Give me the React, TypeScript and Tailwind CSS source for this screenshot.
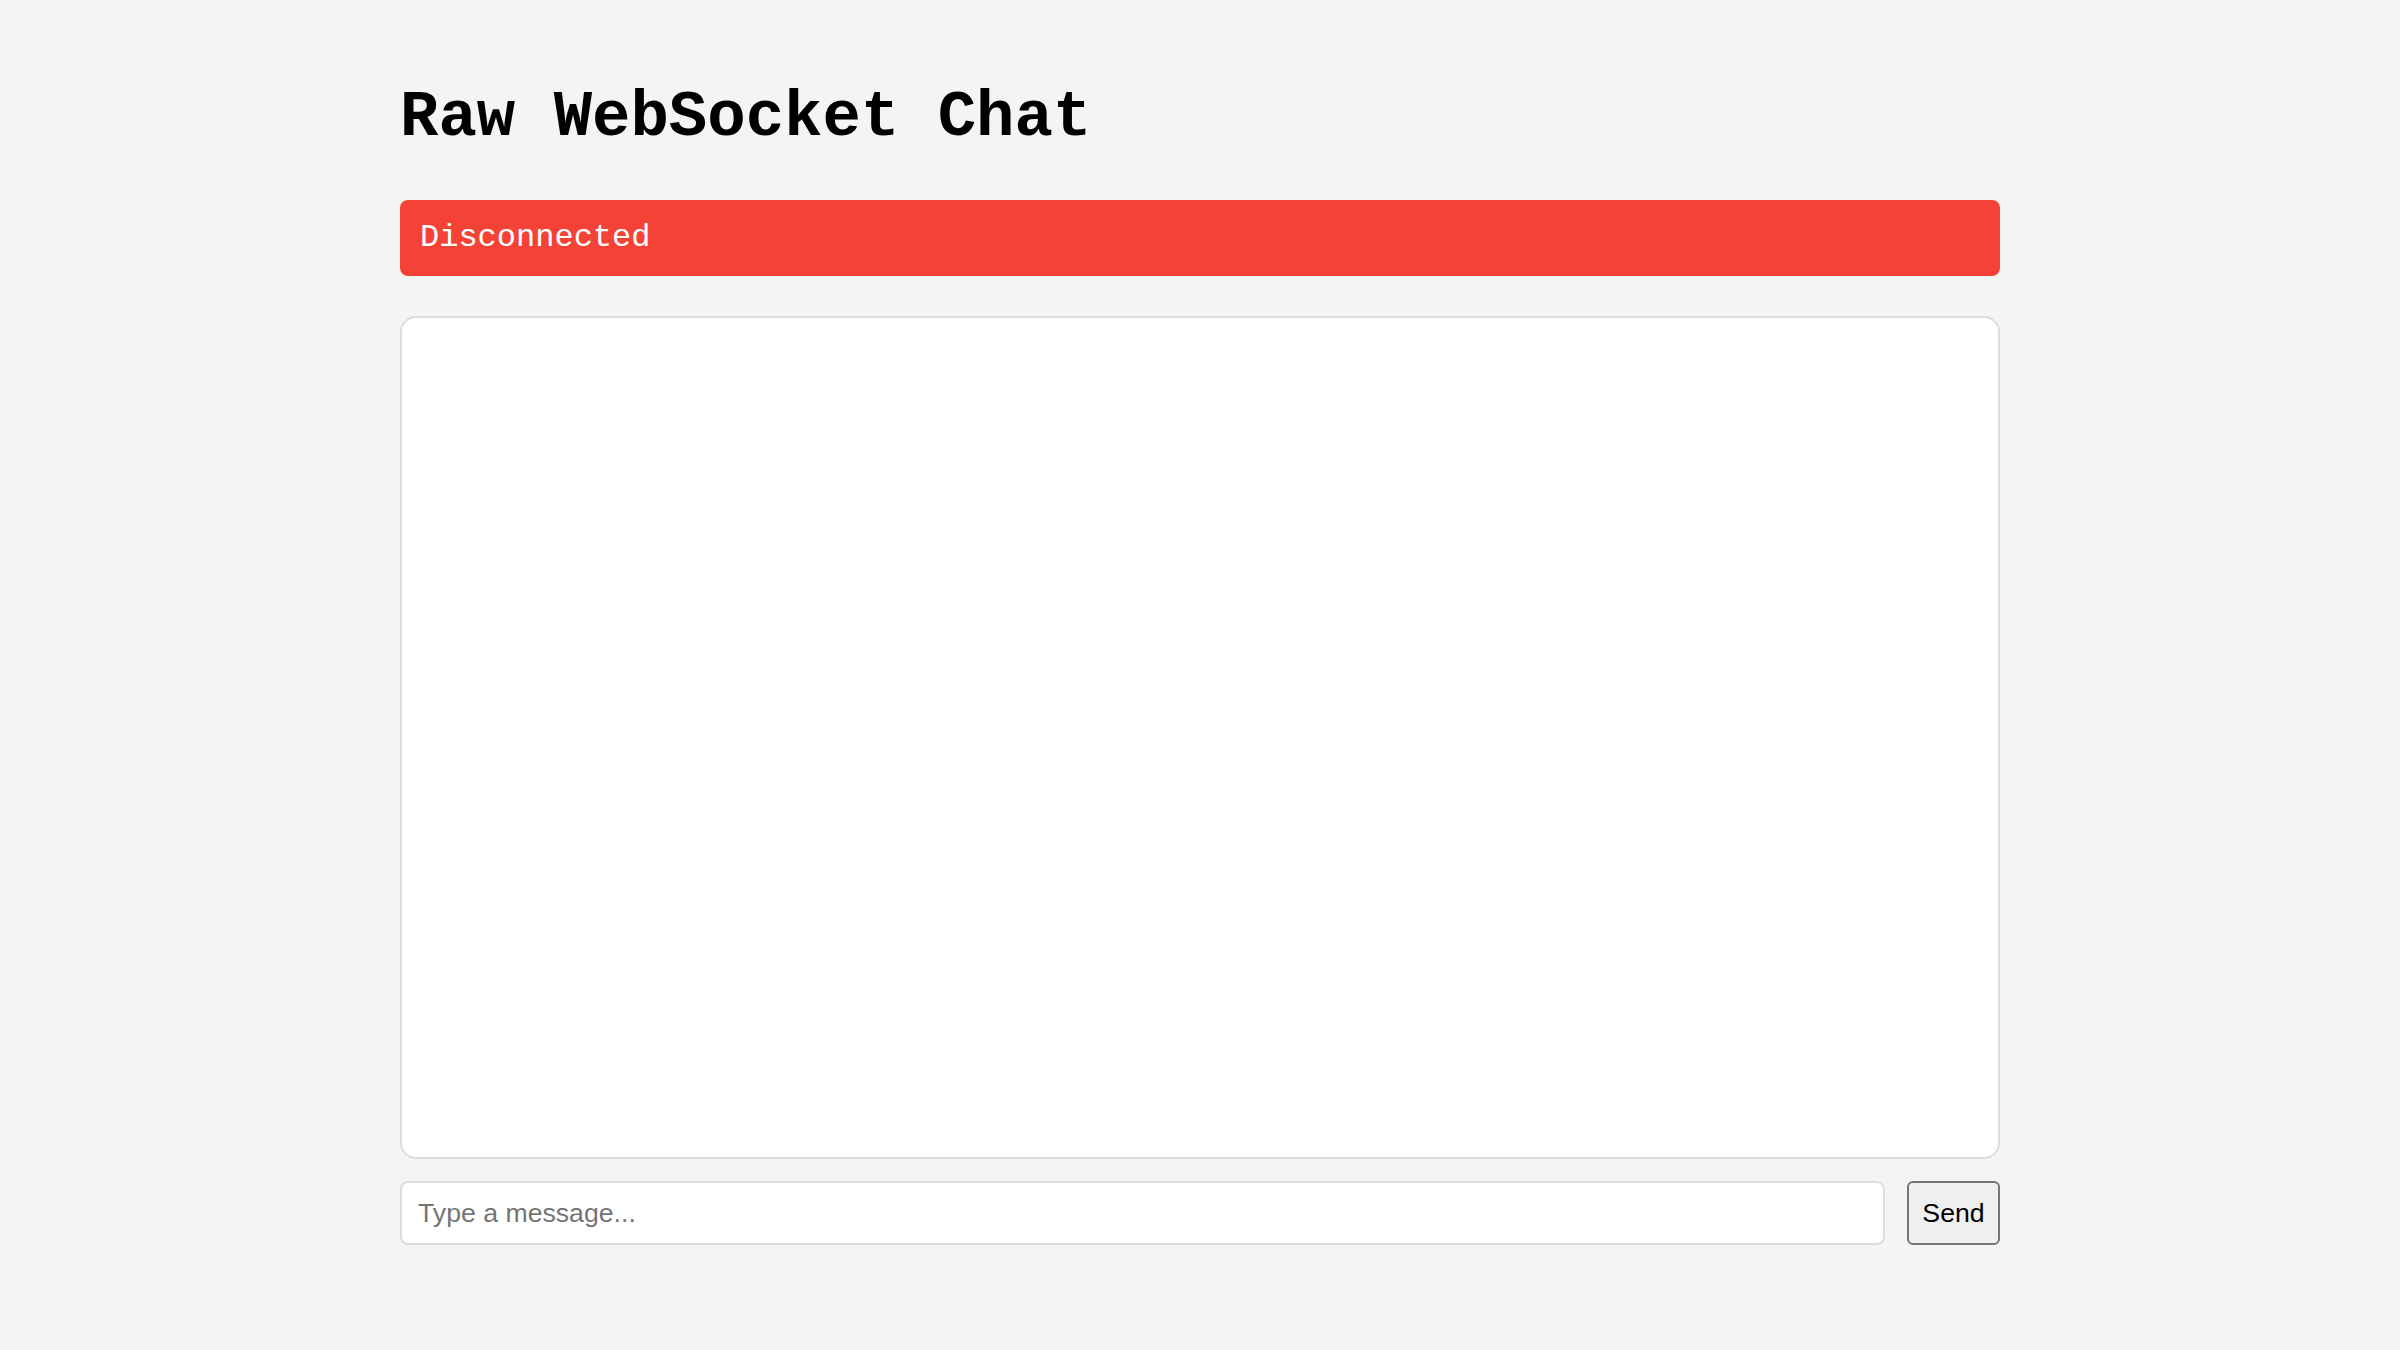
export default function App() {
  return (
    <div className="min-h-screen bg-[#f4f4f4] font-['Liberation_Mono',monospace]">
      <div className="mx-auto w-[1600px] pt-[38px]">
        <h1 className="mt-[44px] mb-[45.5px] text-[64px] font-bold leading-[1.133] text-black">
          Raw WebSocket Chat
        </h1>

        {/* connection status */}
        <div className="rounded-[8px] bg-[#f44336] px-[20px] py-[20px] text-[32px] leading-[1.133] text-white">
          Disconnected
        </div>

        <div className="mt-[40px] h-[843px] rounded-[16px] border-2 border-[#dddddd] bg-white p-[20px]" />

        <div className="mt-[22px] flex gap-[22px]">
          <input
            type="text"
            placeholder="Type a message..."
            className="h-[64px] flex-1 rounded-[8px] border-2 border-[#dddddd] bg-white px-[16px] font-['Liberation_Sans',Arial,sans-serif] text-[26.67px] text-black outline-none placeholder:text-[#757575]"
          />
          <button className="h-[64px] w-[93px] rounded-[6px] border-2 border-[#767676] bg-[#efefef] font-['Liberation_Sans',Arial,sans-serif] text-[26.67px] text-black">
            Send
          </button>
        </div>
      </div>
    </div>
  )
}
